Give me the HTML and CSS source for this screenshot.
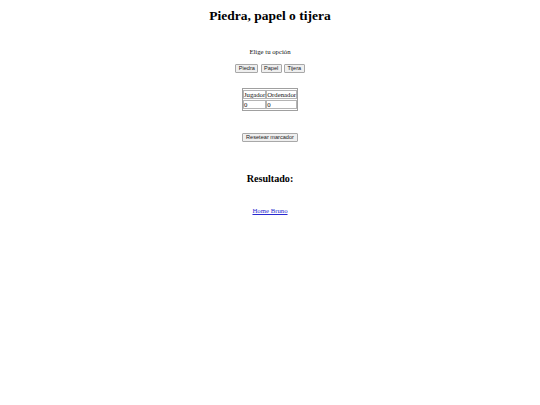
FILE: index.html
```html
<!DOCTYPE html>
<html lang="es">
<head>
<meta charset="utf-8">
<title>Piedra, papel o tijera</title>
<link rel="stylesheet" href="styles.css">
</head>
<body>
<main class="page">
  <h1 class="title">Piedra, papel o tijera</h1>
  <p class="prompt">Elige tu opción</p>
  <div class="choices">
    <button class="btn">Piedra</button>
    <button class="btn">Papel</button>
    <button class="btn">Tijera</button>
  </div>
  <table class="score">
    <tr><td>Jugador</td><td>Ordenador</td></tr>
    <tr><td>0</td><td>0</td></tr>
  </table>
  <div class="reset">
    <button class="btn btn-wide">Resetear marcador</button>
  </div>
  <h2 class="result">Resultado:</h2>
  <a class="home" href="#">Home Bruno</a>
</main>
</body>
</html>
```
FILE: styles.css
```css
html {
  background: #ffffff;
}
body {
  margin: 0;
  font-family: "Liberation Serif", "Times New Roman", serif;
  font-size: 6.75px;
  color: #111111;
}
.page {
  display: flex;
  flex-direction: column;
  align-items: center;
  text-align: center;
}
.title {
  font-size: 13.5px;
  font-weight: bold;
  margin: 8.2px 0 0;
  line-height: 15.6px;
  color: #000;
}
.prompt {
  margin: 24.3px 0 0;
  line-height: 7.8px;
}
.choices {
  margin-top: 8px;
  display: flex;
  gap: 2.3px;
}
.btn {
  font-family: "Liberation Sans", Arial, sans-serif;
  font-size: 5.6px;
  padding: 0 2.4px;
  margin: 0;
  background: #efefef;
  color: #222;
  border: 1px solid #a8a8a8;
  border-radius: 1px;
  height: 9px;
  line-height: 7px;
}
.btn-wide {
  padding: 0 2.9px;
}
.score {
  margin-top: 15px;
  border: 1px solid #a0a0a0;
  border-spacing: 0.6px 1px;
  text-align: left;
}
.score td {
  border: 1px solid #b4b4b4;
  padding: 0;
  line-height: 7px;
}
.reset {
  margin-top: 22px;
}
.result {
  font-size: 10.1px;
  font-weight: bold;
  margin: 31px 0 0;
  line-height: 11.6px;
  color: #000;
}
.home {
  margin-top: 22.3px;
  color: #2a2ad0;
  text-decoration: underline;
  line-height: 7.8px;
}
```
